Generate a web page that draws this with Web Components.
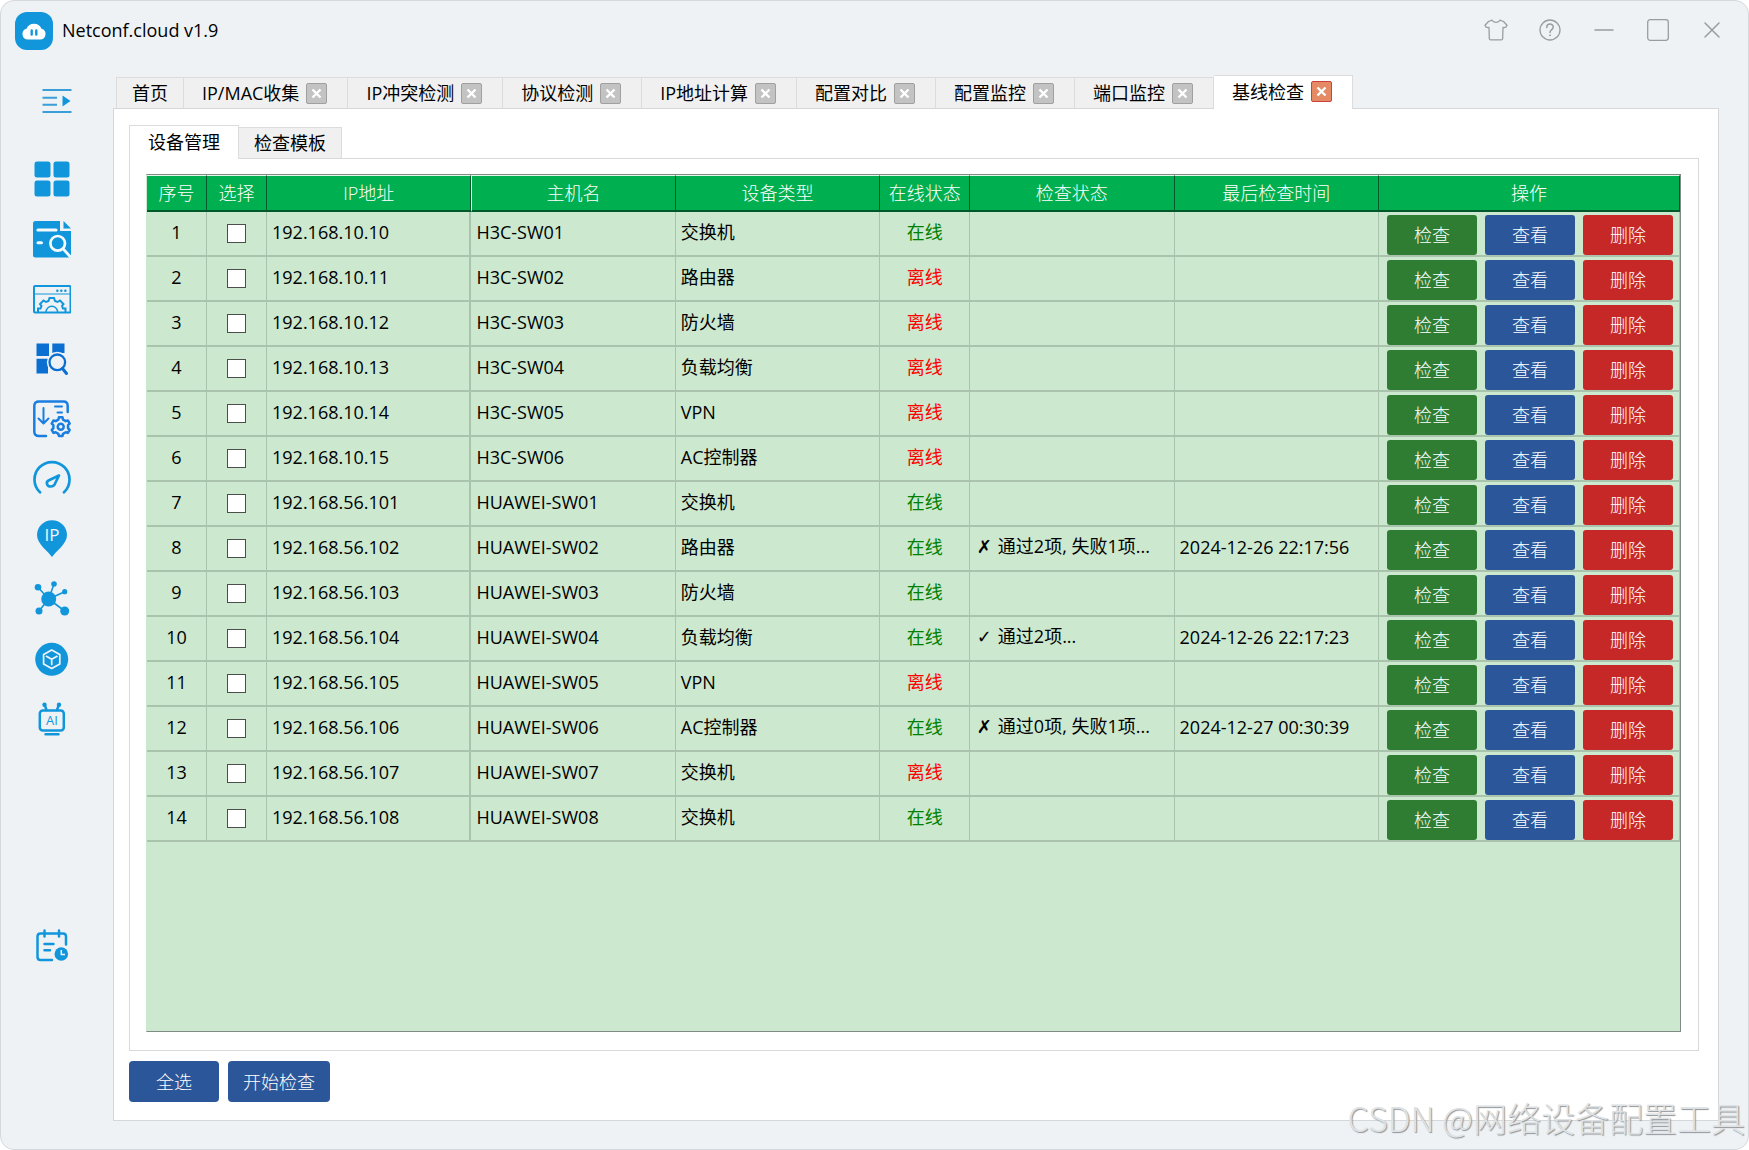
<!DOCTYPE html>
<html lang="zh-CN">
<head>
<meta charset="utf-8">
<title>Netconf.cloud</title>
<style>
    body {
        margin: 0;
        background-color: #ffffff;
        color: #000000;
        font-family: "Open Sans", "Noto Sans CJK SC", sans-serif;
        font-size: 18px;
        font-weight: 390;
        line-height: 24px;
    }
</style>
</head>
<body>
<app-window>
    <title-bar slot="title">Netconf.cloud v1.9</title-bar>
    <side-nav slot="nav"></side-nav>
    <tab-strip slot="tabs">
        <app-tab>首页</app-tab>
        <app-tab closable>IP/MAC收集</app-tab>
        <app-tab closable>IP冲突检测</app-tab>
        <app-tab closable>协议检测</app-tab>
        <app-tab closable>IP地址计算</app-tab>
        <app-tab closable>配置对比</app-tab>
        <app-tab closable>配置监控</app-tab>
        <app-tab closable>端口监控</app-tab>
        <app-tab closable active>基线检查</app-tab>
    </tab-strip>
    <tab-strip slot="subtabs">
        <app-tab active>设备管理</app-tab>
        <app-tab>检查模板</app-tab>
    </tab-strip>
    <device-table></device-table>
    <push-button slot="footer">全选</push-button>
    <push-button slot="footer">开始检查</push-button>
    <water-mark slot="mark">CSDN @网络设备配置工具</water-mark>
</app-window>

<script>
class AppWindow extends HTMLElement {

    constructor() {
        super();
        this.shadowDOM = this.attachShadow({ mode: "open" });
    }

    connectedCallback() {
        this.shadowDOM.innerHTML = `
            <style>
                * {
                    box-sizing: border-box;
                }
                :host {
                    display: flex;
                    flex-direction: column;
                    box-sizing: border-box;
                    position: relative;
                    min-height: 100vh;
                    border: 1px solid #d3d9dc;
                    border-radius: 14px;
                    background-color: #eef2f5;
                    overflow: hidden;
                }
                .body {
                    flex: 1;
                    display: flex;
                }
                .main {
                    flex: 1;
                    min-width: 0;
                    display: flex;
                    flex-direction: column;
                    padding: 14px 29px 28px 0;
                }
                .main > slot {
                    display: block;
                    padding-left: 3px;
                }
                .panel {
                    flex: 1;
                    display: flex;
                    flex-direction: column;
                    padding: 16px 19px 18px 15px;
                    border: 1px solid #d5d7d9;
                    background-color: #ffffff;
                }
                .pane {
                    flex: 1;
                    display: flex;
                    padding: 15px 17px 18px 16px;
                    border: 1px solid #d9d9d9;
                }
                .pane > slot::slotted(*) {
                    flex: 1;
                    min-width: 0;
                }
                .footer {
                    display: flex;
                    gap: 9px;
                    margin-top: 10px;
                }
            </style>

            <slot name="title"></slot>
            <div class="body">
                <slot name="nav"></slot>
                <div class="main">
                    <slot name="tabs"></slot>
                    <div class="panel">
                        <slot name="subtabs"></slot>
                        <div class="pane"><slot></slot></div>
                        <div class="footer"><slot name="footer"></slot></div>
                    </div>
                </div>
            </div>
            <slot name="mark"></slot>`;
    }
}

customElements.define("app-window", AppWindow);

class TitleBar extends HTMLElement {

    constructor() {
        super();
        this.shadowDOM = this.attachShadow({ mode: "open" });
    }

    connectedCallback() {
        this.shadowDOM.innerHTML = `
            <style>
                :host {
                    display: flex;
                    align-items: center;
                    height: 60px;
                    padding: 0 18px 0 14px;
                }
                .logo {
                    width: 38px;
                    height: 38px;
                    margin-right: 9px;
                }
                .tools {
                    display: flex;
                    gap: 18px;
                    margin-left: auto;
                }
                .tools, span {
                    padding-bottom: 2px;
                }
                button {
                    width: 36px;
                    height: 36px;
                    padding: 6px;
                    border: 0;
                    background: none;
                }
                button svg {
                    display: block;
                    width: 24px;
                    height: 24px;
                    fill: none;
                    stroke: #999da0;
                    stroke-width: 1.3;
                    stroke-linecap: round;
                    stroke-linejoin: round;
                }
            </style>

            <svg class="logo" viewBox="0 0 38 38">
                <rect width="38" height="38" rx="12" fill="#1296db"/>
                <path d="M13 27.500a5.500 5.500 0 0 1-1.500-10.800a8.200 8.200 0 0 1 15 0a5.500 5.500 0 0 1-1.500 10.800z" fill="#ffffff"/>
                <path d="M16.700 18.500v4M21.300 18.500v4" stroke="#1296db" stroke-width="2.400" stroke-linecap="round"/>
            </svg>
            <span><slot></slot></span>
            <div class="tools">
                <button aria-label="皮肤"><svg viewBox="0 0 24 24"><path d="M8 2.200C9.500 5 14.500 5 16 2.200L19.500 3.500L23 7.200C22.500 9 21 10 19 9.500L18.700 20.500Q18.600 21.800 17.300 21.800H6.700Q5.400 21.800 5.300 20.500L5 9.500C3 10 1.500 9 1 7.200L4.500 3.500Z"/></svg></button>
                <button aria-label="帮助"><svg viewBox="0 0 24 24"><circle cx="12" cy="12" r="10"/><path d="M8.800 9.500C8.800 5 15.200 5 15.200 9.300C15.200 11.800 12 11.500 12 14.500" stroke-width="1.500"/><circle cx="12" cy="17.300" r=".5" stroke-width="1"/></svg></button>
                <button aria-label="最小化"><svg viewBox="0 0 24 24"><path d="M3 12h18" stroke-width="1.500"/></svg></button>
                <button aria-label="最大化"><svg viewBox="0 0 24 24"><rect x="1.700" y="1.700" width="20.600" height="20.600" rx="2.500"/></svg></button>
                <button aria-label="关闭"><svg viewBox="0 0 24 24"><path d="M5 5l14 14M19 5l-14 14" stroke-width="1.500"/></svg></button>
            </div>`;
    }
}

customElements.define("title-bar", TitleBar);

// teeth evenly spread on a circle
function cog(cx, cy, outer, inner, teeth) {
    const points = [];
    const step = Math.PI * 2 / teeth;
    for (let i = 0; i < teeth; i++) {
        [[-0.3, inner], [-0.18, outer], [0.18, outer], [0.3, inner]].forEach(([turn, r]) => {
            const a = (i + turn) * step - Math.PI / 2;
            points.push((cx + r * Math.cos(a)).toFixed(2) + " " + (cy + r * Math.sin(a)).toFixed(2));
        });
    }
    return "M" + points.join("L") + "Z";
}

const NAV_ICONS = [
    ["首页", `<g fill="#1296db"><rect x="1.500" y="1.500" width="16" height="16" rx="2.500"/><rect x="20.500" y="1.500" width="16" height="16" rx="2.500"/><rect x="1.500" y="20.500" width="16" height="16" rx="2.500"/><rect x="20.500" y="20.500" width="16" height="16" rx="2.500"/></g>`],
    ["信息收集", `<path d="M2.500 1H27V11H38V37.500H2.500Q0 37.500 0 35V3.500Q0 1 2.500 1Z" fill="#1296db"/><path d="M30.500 1L38 8.500H30.500Z" fill="#1296db"/><g fill="none" stroke="#f4f9fc" stroke-linecap="round"><path d="M5 10H23" stroke-width="3.200"/><path d="M5 22.700H8.500" stroke-width="3"/><circle cx="24.700" cy="23.300" r="7.300" stroke-width="2.700"/><path d="M30.300 29L37 36.500" stroke-width="2.700"/></g>`],
    ["自动配置", `<g fill="none" stroke="#1296db"><rect x="1" y="6" width="36.500" height="26.500" rx="1" stroke-width="2"/><path d="M1 14H37" stroke-width="1"/><path d="M24.300 10.700h.1M28.300 10.700h.1M32.300 10.700h.1" stroke-width="2.400" stroke-linecap="round"/><path d="M5 32V28.500H7.500L8.500 26L7 24L10.500 20.500L13 22L15.500 21L16.500 18H21L22 21L24.500 22L27 20.500L30.500 24L29 26L30 28.500H32.500V32" stroke-width="2"/><path d="M13 32a5.800 5.800 0 0 1 11.600 0" stroke-width="1.400"/></g>`],
    ["资产查询", `<path d="M3.500 3.500H16V16H3.500ZM19.300 3.500H31.500V13H19.300ZM3.500 18.700H15V33.500H3.500Z" fill="#0a6fd0"/><circle cx="24.300" cy="22.300" r="10.500" fill="#eef2f5"/><circle cx="24.300" cy="22.300" r="7.800" fill="none" stroke="#0a6fd0" stroke-width="2.300"/><path d="M29.500 28.500L33.500 33.500" stroke="#0a6fd0" stroke-width="3" stroke-linecap="round"/>`],
    ["下发配置", `<g fill="none" stroke="#1a7ee0" stroke-width="2.500" stroke-linecap="round" stroke-linejoin="round"><path d="M34.700 12V6Q34.700 1.500 30.500 1.500H6Q1.300 1.500 1.300 6V31.500Q1.300 36 6 36H13"/><path d="M10.500 8V23M5.500 18.500L10.500 23.500L15.500 18.500M22 6.500H29M24.500 12.500H29" stroke-width="2"/><path d="${cog(27.7, 26.7, 9.5, 7.5, 6)}"/><circle cx="27.700" cy="26.700" r="3"/></g>`],
    ["性能监测", `<g fill="none" stroke="#1296db" stroke-width="2.700" stroke-linecap="round" stroke-linejoin="round"><path d="M7 32.300A17.500 17.500 0 1 1 31 32.300"/><path d="M26 15.500L15.500 20.500C12.500 22 14 26.500 17.500 26.500C20.500 26.500 22 24.500 22.500 22.500Z"/></g>`],
    ["IP地址", `<path d="M19 37C15.500 31.500 4 24 4 15.200A15 15 0 0 1 34 15.200C34 24 22.500 31.500 19 37Z" fill="#1296db"/><text x="19" y="21" text-anchor="middle" fill="#eef6fb" font-size="17" font-weight="400">IP</text>`],
    ["拓扑", `<g fill="#1296db"><path d="M5 7.300L15.700 19L21 4M31.700 11.700L15.700 19L6 31M15.700 19L31.700 31" fill="none" stroke="#1296db" stroke-width="1.600"/><circle cx="15.700" cy="19" r="7.500"/><circle cx="5" cy="7.300" r="3.300"/><circle cx="21" cy="4" r="2.800"/><circle cx="31.700" cy="11.700" r="2.600"/><circle cx="6" cy="31" r="3.500"/><circle cx="31.700" cy="31" r="4.500"/></g>`],
    ["模型", `<circle cx="18.700" cy="19.300" r="16.500" fill="#1296db"/><path d="M18.700 10L26.800 14.500V24L18.700 28.500L10.600 24V14.500ZM13.500 16.300L18.700 19.300L24 16.300M18.700 19.300V24.500" fill="none" stroke="#eef6fb" stroke-width="1.700" stroke-linejoin="round" stroke-linecap="round"/>`],
    ["智能助手", `<g fill="none" stroke="#1296db" stroke-width="2.500" stroke-linecap="round"><rect x="6.800" y="10.500" width="24" height="20" rx="3"/><path d="M13.500 10L11.700 5M24 10L25.800 5M12.500 34.300H25.500"/></g><circle cx="11.500" cy="4.700" r="2.200" fill="#1296db"/><circle cx="26" cy="4.700" r="2.200" fill="#1296db"/><text x="19" y="25" text-anchor="middle" fill="#1296db" font-size="13" font-weight="400">AI</text>`],
    ["计划任务", `<g fill="none" stroke="#1296db" stroke-width="2.500" stroke-linecap="round"><path d="M33 17.500V9.500Q33 6.500 30 6.500H7.500Q4.500 6.500 4.500 9.500V30Q4.500 33 7.500 33H19"/><path d="M11.500 3.500V9.500M26 3.500V9.500M11.500 17H20.500M11.500 23.300H17"/></g><circle cx="28.300" cy="27" r="6.800" fill="#1296db"/><path d="M28.300 23V27.500H32" fill="none" stroke="#eef6fb" stroke-width="1.500"/>`]
];

class SideNav extends HTMLElement {

    constructor() {
        super();
        this.shadowDOM = this.attachShadow({ mode: "open" });
    }

    connectedCallback() {
        const links = NAV_ICONS.map(([name, shape]) => `
            <a href="#" aria-label="${name}"><svg viewBox="0 0 38 38">${shape}</svg></a>`).join("");

        this.shadowDOM.innerHTML = `
            <style>
                :host {
                    display: block;
                    flex: 0 0 112px;
                }
                nav {
                    display: flex;
                    flex-direction: column;
                    box-sizing: border-box;
                    height: 100%;
                    padding: 27px 0 184px 32px;
                }
                button {
                    width: 30px;
                    height: 26px;
                    margin: 0 0 46px 9px;
                    padding: 0;
                    border: 0;
                    background: none;
                }
                a {
                    width: 38px;
                    height: 38px;
                    margin-bottom: 22px;
                }
                a:last-child {
                    margin: auto 0 0;
                }
                svg {
                    display: block;
                    width: 100%;
                    height: 100%;
                }
            </style>

            <nav>
                <button aria-label="展开菜单">
                    <svg viewBox="0 0 30 26">
                        <path d="M.500 2H29.500M.500 9.700H15M.500 16.700H15M.500 24H29.500" stroke="#3a9fd9" stroke-width="2"/>
                        <path d="M20.500 7.500L28.500 13L20.500 18.500Z" fill="#1296db"/>
                    </svg>
                </button>
                ${links}
            </nav>`;
    }
}

customElements.define("side-nav", SideNav);

class TabStrip extends HTMLElement {

    constructor() {
        super();
        this.shadowDOM = this.attachShadow({ mode: "open" });
    }

    connectedCallback() {
        this.shadowDOM.innerHTML = `
            <style>
                :host {
                    display: flex;
                    align-items: flex-end;
                }
            </style>

            <slot></slot>`;
    }
}

customElements.define("tab-strip", TabStrip);

class AppTab extends HTMLElement {

    constructor() {
        super();
        this.shadowDOM = this.attachShadow({ mode: "open" });
    }

    connectedCallback() {
        const close = this.hasAttribute("closable")
            ? `<button class="close" aria-label="关闭标签"><svg viewBox="0 0 19 19"><path d="M5.500 5.500l8 8M13.500 5.500l-8 8"/></svg></button>`
            : "";

        this.shadowDOM.innerHTML = `
            <style>
                :host {
                    display: flex;
                    align-items: center;
                    box-sizing: border-box;
                    height: 31px;
                    padding: 0 15px;
                    border: 1px solid #dcdcdc;
                    border-width: 1px 1px 0 0;
                    background-color: #f0f0f0;
                }
                :host(:first-child) {
                    border-left-width: 1px;
                }
                :host([closable]) {
                    padding: 0 20px 0 18px;
                }
                :host([active]) {
                    position: relative;
                    height: 34px;
                    margin-bottom: -1px;
                    padding-bottom: 2px;
                    background-color: #ffffff;
                }
                :host([active]:first-child) {
                    padding-left: 18px;
                    padding-right: 18px;
                }
                button {
                    padding: 0;
                    border: 0;
                    background: none;
                    color: inherit;
                    font: inherit;
                    white-space: nowrap;
                }
                .close {
                    box-sizing: border-box;
                    width: 21px;
                    height: 21px;
                    margin-left: 7px;
                    border: 1px solid #a0a0a0;
                    border-radius: 2px;
                    background-color: #c3c3c3;
                }
                :host([active]) .close {
                    border-color: #c8413b;
                    background-color: #e58a64;
                }
                svg {
                    display: block;
                    stroke: #ffffff;
                    stroke-width: 2.4;
                }
            </style>

            <button><slot></slot></button>${close}`;
    }
}

customElements.define("app-tab", AppTab);

class PushButton extends HTMLElement {

    constructor() {
        super();
        this.shadowDOM = this.attachShadow({ mode: "open" });
    }

    connectedCallback() {
        this.shadowDOM.innerHTML = `
            <style>
                :host {
                    display: block;
                    --fill: #2b579a;
                }
                :host([kind="check"]) {
                    --fill: #2e7d32;
                }
                :host([kind="delete"]) {
                    --fill: #c62828;
                }
                button {
                    display: block;
                    min-width: 90px;
                    height: 41px;
                    padding: 0 15px;
                    border: 0;
                    border-radius: 4px;
                    background-color: var(--fill);
                    color: #ffffff;
                    font: inherit;
                    font-weight: 300;
                }
                :host([compact]) button {
                    height: 40px;
                    border-radius: 3px;
                }
            </style>

            <button><slot></slot></button>`;
    }
}

customElements.define("push-button", PushButton);

const DEVICES = [
    ["192.168.10.10", "H3C-SW01", "交换机", true],
    ["192.168.10.11", "H3C-SW02", "路由器", false],
    ["192.168.10.12", "H3C-SW03", "防火墙", false],
    ["192.168.10.13", "H3C-SW04", "负载均衡", false],
    ["192.168.10.14", "H3C-SW05", "VPN", false],
    ["192.168.10.15", "H3C-SW06", "AC控制器", false],
    ["192.168.56.101", "HUAWEI-SW01", "交换机", true],
    ["192.168.56.102", "HUAWEI-SW02", "路由器", true, "✗", "通过2项, 失败1项...", "2024-12-26 22:17:56"],
    ["192.168.56.103", "HUAWEI-SW03", "防火墙", true],
    ["192.168.56.104", "HUAWEI-SW04", "负载均衡", true, "✓", "通过2项...", "2024-12-26 22:17:23"],
    ["192.168.56.105", "HUAWEI-SW05", "VPN", false],
    ["192.168.56.106", "HUAWEI-SW06", "AC控制器", true, "✗", "通过0项, 失败1项...", "2024-12-27 00:30:39"],
    ["192.168.56.107", "HUAWEI-SW07", "交换机", false],
    ["192.168.56.108", "HUAWEI-SW08", "交换机", true]
];

class DeviceTable extends HTMLElement {

    constructor() {
        super();
        this.shadowDOM = this.attachShadow({ mode: "open" });
    }

    connectedCallback() {
        const rows = DEVICES.map(([ip, host, type, online, mark, result, time = ""], i) => `
            <tr>
                <td class="center">${i + 1}</td>
                <td class="center"><input type="checkbox" aria-label="选择 ${host}"></td>
                <td>${ip}</td>
                <td>${host}</td>
                <td>${type}</td>
                <td class="center ${online ? "online" : "offline"}">${online ? "在线" : "离线"}</td>
                <td>${mark ? `<span class="mark">${mark}</span> ${result}` : ""}</td>
                <td>${time}</td>
                <td class="actions">
                    <div>
                        <push-button compact kind="check">检查</push-button>
                        <push-button compact>查看</push-button>
                        <push-button compact kind="delete">删除</push-button>
                    </div>
                </td>
            </tr>`).join("");

        this.shadowDOM.innerHTML = `
            <style>
                * {
                    box-sizing: border-box;
                }
                :host {
                    display: block;
                    box-sizing: border-box;
                    border: 1px solid #7f8b84;
                    border-left-color: #cce8cf;
                    background-color: #cce8cf;
                }
                table {
                    width: 100%;
                    table-layout: fixed;
                    border-collapse: separate;
                    border-spacing: 0;
                }
                .narrow {
                    width: 60px;
                }
                .status {
                    width: 90px;
                }
                .buttons {
                    width: 301px;
                }
                th {
                    height: 37px;
                    padding: 0;
                    border-top: 1px solid #e4f6ea;
                    border-right: 1px solid #00592a;
                    border-bottom: 2px solid #00592a;
                    background-color: #00b050;
                    color: #ffffff;
                    font-weight: 300;
                }
                th:nth-child(4) {
                    border-left: 1px solid #e4f6ea;
                }
                td {
                    height: 45px;
                    padding: 0 5px 4px;
                    border-right: 1px solid #a9c3ac;
                    border-bottom: 2px solid #a9c3ac;
                    white-space: nowrap;
                    overflow: hidden;
                }
                td:nth-child(3) {
                    border-right-width: 2px;
                }
                .center {
                    padding: 0 0 4px;
                    text-align: center;
                }
                .online {
                    color: #008000;
                }
                .offline {
                    color: #ff0000;
                }
                .mark {
                    display: inline-block;
                    width: 18px;
                    font-family: "DejaVu Sans", sans-serif;
                    text-align: center;
                }
                input {
                    appearance: none;
                    display: block;
                    width: 19px;
                    height: 19px;
                    margin: 4px auto 0;
                    border: 1px solid #4a4f4b;
                    background-color: #ffffff;
                }
                input:checked {
                    background-color: #2b579a;
                }
                .actions {
                    padding: 3px 0 0 8px;
                    vertical-align: top;
                }
                .actions div {
                    display: flex;
                    gap: 8px;
                }
            </style>

            <table>
                <colgroup>
                    <col class="narrow"><col class="narrow"><col><col><col><col class="status"><col><col><col class="buttons">
                </colgroup>
                <thead>
                    <tr>
                        <th>序号</th>
                        <th>选择</th>
                        <th>IP地址</th>
                        <th>主机名</th>
                        <th>设备类型</th>
                        <th>在线状态</th>
                        <th>检查状态</th>
                        <th>最后检查时间</th>
                        <th>操作</th>
                    </tr>
                </thead>
                <tbody>${rows}</tbody>
            </table>`;
    }
}

customElements.define("device-table", DeviceTable);

class WaterMark extends HTMLElement {

    constructor() {
        super();
        this.shadowDOM = this.attachShadow({ mode: "open" });
    }

    connectedCallback() {
        this.shadowDOM.innerHTML = `
            <style>
                :host {
                    position: absolute;
                    right: 3px;
                    bottom: 7px;
                    color: #dfe2e4;
                    font-family: "Noto Sans CJK SC", sans-serif;
                    font-size: 34px;
                    font-weight: 300;
                    line-height: 48px;
                    white-space: nowrap;
                    text-shadow: 1px 1px 1px #8f9396;
                    pointer-events: none;
                }
            </style>

            <slot></slot>`;
    }
}

customElements.define("water-mark", WaterMark);
</script>
</body>
</html>
